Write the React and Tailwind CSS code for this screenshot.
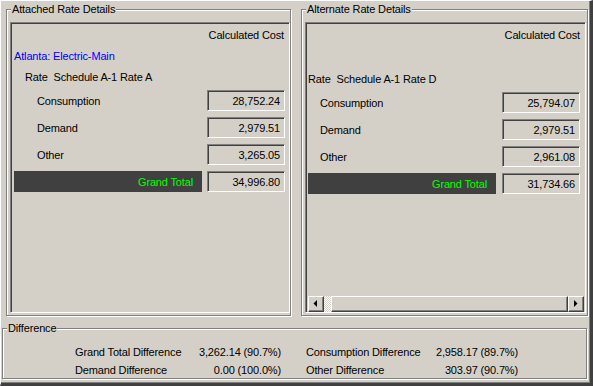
import React from "react";

const sunkenBox =
  "border border-t-[#808080] border-l-[#808080] border-r-white border-b-white shadow-[inset_1px_1px_0_#404040]";
const raised =
  "border border-t-white border-l-white border-r-[#404040] border-b-[#404040] shadow-[inset_-1px_-1px_0_#808080] bg-[#d4d0c8]";

function GroupBox({ title, className, children }) {
  return (
    <div
      className={
        "relative border border-[#808080] shadow-[1px_1px_0_#fff,inset_1px_1px_0_#fff] " +
        className
      }
    >
      <div className="absolute left-[4px] -top-[7px] px-px bg-[#d4d0c8] leading-[13px] whitespace-nowrap">
        {title}
      </div>
      {children}
    </div>
  );
}

function ValueBox({ value }) {
  return (
    <div className={"w-[78px] h-[21px] flex items-center justify-end pr-[4px] pt-[1px] " + sunkenBox}>
      {value}
    </div>
  );
}

function Row({ label, value, labelPad, boxMr }) {
  return (
    <div className="flex items-center justify-between h-[21px]" style={{ marginRight: boxMr }}>
      <div className="pt-[2px]" style={{ paddingLeft: labelPad }}>{label}</div>
      <ValueBox value={value} />
    </div>
  );
}

function GTRow({ value, barMl, boxMr }) {
  return (
    <div className="flex items-center justify-between h-[21px]" style={{ marginRight: boxMr }}>
      <div
        className="w-[188px] h-[21px] bg-[#404040] text-[#00ff00] flex items-center justify-end pr-[9px] pt-[1px]"
        style={{ marginLeft: barMl }}
      >
        Grand Total
      </div>
      <ValueBox value={value} />
    </div>
  );
}

function Arrow({ dir }) {
  return (
    <svg width="14" height="14" viewBox="0 0 14 14">
      {dir === "left" ? (
        <polygon points="8,3 8,10 4.5,6.5" fill="#000" />
      ) : (
        <polygon points="5,3 5,10 8.5,6.5" fill="#000" />
      )}
    </svg>
  );
}

function Scrollbar() {
  return (
    <div className="flex h-[16px] mt-auto ml-[2px] mr-[1px]">
      <div className={"w-[16px] h-[16px] flex items-center justify-center " + raised}>
        <Arrow dir="left" />
      </div>
      <div className="w-[7px] h-[16px] bg-[repeating-conic-gradient(#ffffff_0_25%,#d4d0c8_0_50%)] bg-[length:2px_2px]" />
      <div className={"flex-1 h-[16px] " + raised} />
      <div className={"w-[16px] h-[16px] flex items-center justify-center " + raised}>
        <Arrow dir="right" />
      </div>
    </div>
  );
}

export default function App() {
  return (
    <div className="w-[593px] h-[386px] bg-[#d4d0c8] border-t border-l border-t-white border-l-white border-r-[3px] border-b-[3px] border-r-[#404040] border-b-[#404040] shadow-[inset_-1px_-1px_0_#808080] font-['Liberation_Sans',Arial,sans-serif] text-[11px] tracking-[-0.15px] text-black leading-[13px] flex flex-col">
      <div className="flex pl-[5px] pt-[8px]">
        <GroupBox title="Attached Rate Details" className="w-[285px] h-[307px]">
          <div className={"ml-[3px] mt-[12px] w-[280px] h-[291px] flex flex-col " + sunkenBox}>
            <div className="h-[21px] mt-[1px] pt-[2px] flex items-center justify-end pr-[5px]">Calculated Cost</div>
            <div className="h-[21px] pt-[2px] flex items-center pl-[3px] text-[#0000ff]">Atlanta: Electric-Main</div>
            <div className="h-[21px] pt-[2px] flex items-center pl-[14px] whitespace-pre">Rate  Schedule A-1 Rate A</div>
            <div className="mt-[3px] flex flex-col gap-[6px]">
              <Row label="Consumption" value="28,752.24" labelPad={26} boxMr={4} />
              <Row label="Demand" value="2,979.51" labelPad={26} boxMr={4} />
              <Row label="Other" value="3,265.05" labelPad={26} boxMr={4} />
              <GTRow value="34,996.80" barMl={3} boxMr={4} />
            </div>
          </div>
        </GroupBox>
        <GroupBox title="Alternate Rate Details" className="ml-[10px] w-[287px] h-[307px]">
          <div className={"ml-[3px] mt-[12px] w-[281px] h-[291px] flex flex-col " + sunkenBox}>
            <div className="h-[21px] mt-[1px] pt-[2px] flex items-center justify-end pr-[5px]">Calculated Cost</div>
            <div className="h-[23px]" />
            <div className="h-[21px] pt-[2px] flex items-center pl-[2px] whitespace-pre">Rate  Schedule A-1 Rate D</div>
            <div className="mt-[3px] flex flex-col gap-[6px]">
              <Row label="Consumption" value="25,794.07" labelPad={14} boxMr={5} />
              <Row label="Demand" value="2,979.51" labelPad={14} boxMr={5} />
              <Row label="Other" value="2,961.08" labelPad={14} boxMr={5} />
              <GTRow value="31,734.66" barMl={2} boxMr={5} />
            </div>
            <Scrollbar />
          </div>
        </GroupBox>
      </div>
      <GroupBox title="Difference" className="ml-[1px] mt-[12px] w-[585px] h-[51px]">
        <div className="pt-[16px] pl-[72px] flex flex-col gap-[4px] leading-[14px]">
          <div className="flex">
            <div className="w-[206px] flex justify-between">
              <span>Grand Total Difference</span>
              <span>3,262.14 (90.7%)</span>
            </div>
            <div className="ml-[25px] w-[212px] flex justify-between">
              <span>Consumption Difference</span>
              <span>2,958.17 (89.7%)</span>
            </div>
          </div>
          <div className="flex">
            <div className="w-[206px] flex justify-between">
              <span>Demand Difference</span>
              <span>0.00 (100.0%)</span>
            </div>
            <div className="ml-[25px] w-[212px] flex justify-between">
              <span>Other Difference</span>
              <span>303.97 (90.7%)</span>
            </div>
          </div>
        </div>
      </GroupBox>
    </div>
  );
}
